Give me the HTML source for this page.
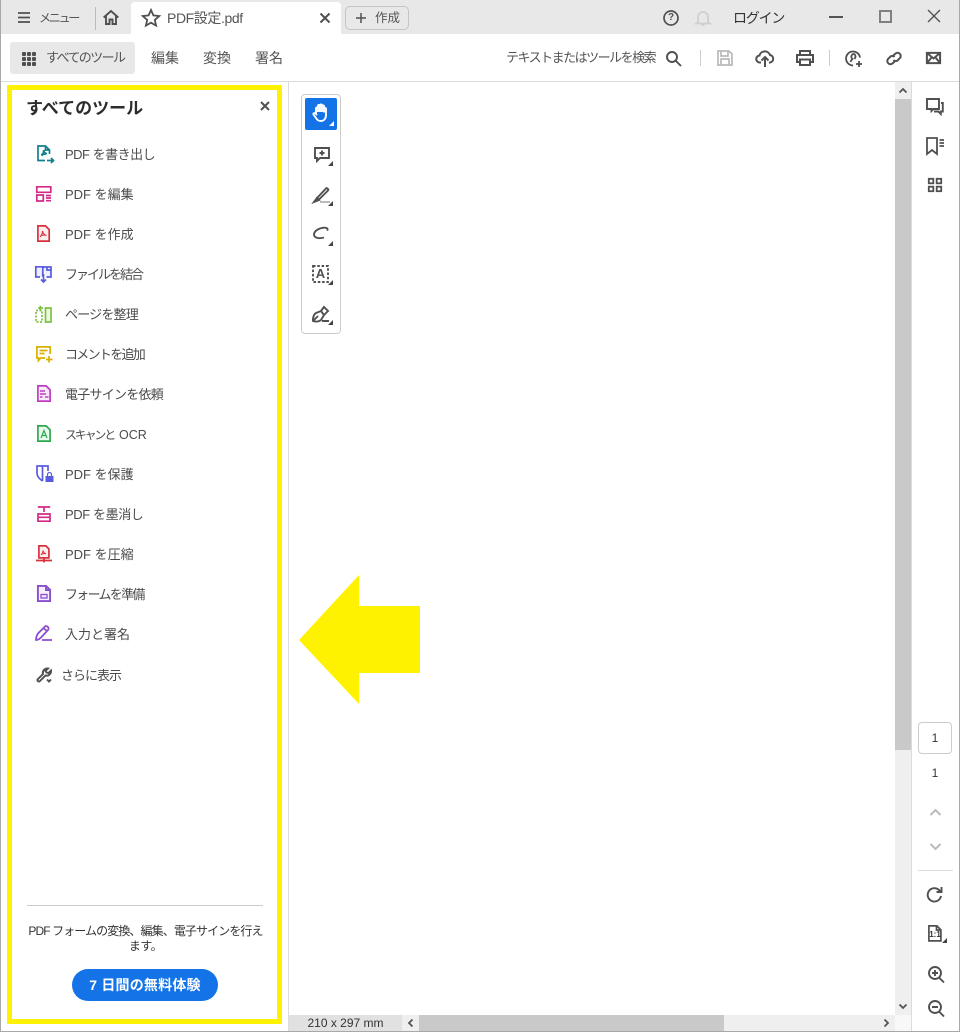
<!DOCTYPE html>
<html lang="ja"><head><meta charset="utf-8"><title>PDF設定.pdf</title>
<style>
html,body{margin:0;padding:0;background:#fff}
body{width:960px;height:1032px;position:relative;overflow:hidden;font-family:"Liberation Sans","Noto Sans CJK JP",sans-serif;color:#4b4b4b}
.a{position:absolute}
.t{position:absolute;white-space:nowrap;line-height:20px;height:20px}
svg{position:absolute;overflow:visible;fill:none;stroke:#505050;stroke-width:1.7}
.tool{font-size:13px;left:65px;color:#4b4b4b}
.tri{position:absolute;width:0;height:0;border-style:solid;border-width:0 0 6px 6px;border-color:transparent transparent #444 transparent}
</style></head><body>
<!-- title bar -->
<div class="a" style="left:0;top:0;width:960px;height:34px;background:#e8e8e8"></div>
<div class="a" style="left:131px;top:2px;width:210px;height:32px;background:#fff;border-radius:4px 4px 0 0"></div>
<svg style="left:18px;top:12px" width="12" height="11"><path d="M0 1H12M0 5.5H12M0 10H12"/></svg>
<div class="t" style="left:39px;top:8px;font-size:12px;color:#555;letter-spacing:-2.200px">メニュー</div>
<div class="a" style="left:95px;top:7px;width:1px;height:23px;background:#bbb"></div>
<svg style="left:103px;top:10px;stroke-width:1.900" width="16" height="15"><path d="M.7 7.500 8 1l7.300 6.500M3 6v8h3.500V9.500h3V14H13V6"/></svg>
<svg style="left:142px;top:9px;stroke-width:1.800" width="18" height="17"><path d="M9 1l2.400 5.400 5.800.6-4.400 3.900 1.300 5.700L9 13.700l-5.100 2.900 1.300-5.700L.8 7l5.800-.6z"/></svg>
<div class="t" style="left:167px;top:8px;font-size:14px;color:#555;letter-spacing:-.400px">PDF設定.pdf</div>
<svg style="left:320px;top:13px;stroke-width:2" width="10" height="10"><path d="M.5.500l9 9M9.500.500l-9 9"/></svg>
<div class="a" style="left:345px;top:6px;width:62px;height:22px;border:1px solid #c4c4c4;border-radius:5px"></div>
<svg style="left:356px;top:13px;stroke-width:1.500" width="10" height="10"><path d="M5 0v10M0 5h10"/></svg>
<div class="t" style="left:375px;top:8px;font-size:12.500px;color:#555">作成</div>
<svg style="left:663px;top:10px" width="16" height="16"><circle cx="8" cy="8" r="7"/></svg>
<div class="t" style="left:663px;top:8px;width:16px;text-align:center;font-size:10px;font-weight:bold;color:#505050">?</div>
<svg style="left:695px;top:10px;stroke:#cfcfcf" width="16" height="16"><path d="M3 12V7a5 5 0 0 1 10 0v5l2 1.500H1zM6.500 15h3"/></svg>
<div class="t" style="left:733px;top:8px;font-size:14px;color:#333;letter-spacing:-1.200px">ログイン</div>
<div class="a" style="left:829px;top:16px;width:14px;height:2px;background:#555"></div>
<div class="a" style="left:879px;top:10px;width:9px;height:9px;border:2px solid #808080"></div>
<svg style="left:928px;top:10px;stroke-width:1.300" width="12" height="12"><path d="M0 0l12 12M12 0 0 12"/></svg>
<!-- toolbar -->
<div class="a" style="left:0;top:81px;width:960px;height:1px;background:#dcdcdc"></div>
<div class="a" style="left:10px;top:42px;width:125px;height:32px;background:#e8e8e8;border-radius:3px"></div>
<svg style="left:22px;top:52px;stroke:none;fill:#505050" width="14" height="14"><rect width="4" height="4" rx="1"/><rect x="5" width="4" height="4" rx="1"/><rect x="10" width="4" height="4" rx="1"/><rect y="5" width="4" height="4" rx="1"/><rect x="5" y="5" width="4" height="4" rx="1"/><rect x="10" y="5" width="4" height="4" rx="1"/><rect y="10" width="4" height="4" rx="1"/><rect x="5" y="10" width="4" height="4" rx="1"/><rect x="10" y="10" width="4" height="4" rx="1"/></svg>
<div class="t" style="left:46px;top:48px;font-size:13px;color:#555;letter-spacing:-1.600px">すべてのツール</div>
<div class="t" style="left:151px;top:48px;font-size:14px;color:#555">編集</div>
<div class="t" style="left:203px;top:48px;font-size:14px;color:#555">変換</div>
<div class="t" style="left:255px;top:48px;font-size:14px;color:#555">署名</div>
<div class="t" style="left:506px;top:48px;font-size:13px;color:#555;letter-spacing:-1.500px">テキストまたはツールを検索</div>
<svg style="left:666px;top:51px;stroke-width:1.900" width="15" height="15"><circle cx="6" cy="6" r="5"/><path d="M9.500 9.500 15 15"/></svg>
<div class="a" style="left:700px;top:50px;width:1px;height:16px;background:#ccc"></div>
<svg style="left:717px;top:50px;stroke:#b9b9b9" width="16" height="16"><path d="M1 1h11l3 3v11H1zM4 1v5h7V1M4 15v-6h8v6"/></svg>
<svg style="left:756px;top:50px;stroke-width:2" width="18" height="17"><path d="M5 12.500H4a3.500 3.500 0 0 1-.5-7A5.500 5.500 0 0 1 14 5a3.800 3.800 0 0 1 0 7.500h-1M9 17V8M5.500 10.500 9 7l3.500 3.500"/></svg>
<svg style="left:796px;top:50px;stroke-width:2" width="18" height="16"><path d="M4 5V1h10v4M4 12H1V5h16v7h-3M4 9.500h10V15H4z"/></svg>
<div class="a" style="left:829px;top:50px;width:1px;height:16px;background:#ccc"></div>
<svg style="left:845px;top:50px;stroke-width:1.800" width="18" height="18"><path d="M8 15.500A7 7 0 1 1 15 7.500M5.500 12c.5-2 1.500-2.500 2-3-2.500-2-.5-5 1-5s3 2.500 1 5M14 11v6M11 14h6"/></svg>
<svg style="left:886px;top:51px;stroke-width:2" width="16" height="15"><path d="M6.500 5.500 9 3a3 3 0 0 1 5 4l-2.500 2.500a3 3 0 0 1-4-.5M9.500 9.500 7 12a3 3 0 0 1-5-4l2.500-2.500a3 3 0 0 1 4 .5"/></svg>
<svg style="left:926px;top:52px;stroke-width:2" width="15" height="12"><path d="M.9.900h13.200v10.200H.9zM1 1l6.500 5.500L14 1M1 11l4.500-5.500M14 11 9.500 5.500"/></svg>
<!-- panel -->
<div class="a" style="left:288px;top:82px;width:1px;height:950px;background:#dcdcdc"></div>
<div class="a" style="left:7px;top:85px;width:265px;height:929px;border:5px solid #fff200"></div>
<div class="t" style="left:26px;top:98px;font-size:17px;font-weight:bold;color:#2c2c2c;line-height:22px">すべてのツール</div>
<svg style="left:261px;top:102px;stroke-width:2" width="8" height="8"><path d="M0 0l8 8M8 0 0 8"/></svg>
<svg style="left:37px;top:145px;stroke:#12808c" width="17" height="18"><path d="M8 15.500H1V1h7.500L12.500 5v4M8.500 1v4h4M5 11c1-2 2-4 1.500-6 1 3 2 3.500 3.500 3.700M4 9.500 9 9M10 15.500h6M14 13l2.500 2.500L14 18"/></svg>
<div class="t tool" style="top:145px;letter-spacing:-.500px">PDF を書き出し</div>
<svg style="left:36px;top:186px;stroke:#d22a86" width="16" height="16"><path d="M.8.800h14v5.500H.800zM.8 9h6.500v6H.8zM10 9.500h5M10 12h5M10 14.700h5" /></svg>
<div class="t tool" style="top:185px">PDF を編集</div>
<svg style="left:37px;top:225px;stroke:#d9303e" width="13" height="17"><path d="M.9.900h7.600l3.700 3.700v11.500H.9z" fill="#fdeeee"/><path d="M3 12c1.500-1.500 2.500-4 2.500-6 .5 2.500 2 4 4 4.500M3.500 10.500l5-.5" stroke-width="1.100"/></svg>
<div class="t tool" style="top:225px">PDF を作成</div>
<svg style="left:35px;top:266px;stroke:#5a5ce0" width="17" height="17"><path d="M5 11H.8V.800h7v10M8 1h8v10h-4.500M12 1v3h4" fill="#eef" /><path d="M8.500 8v8M6 13.500l2.500 2.500 2.500-2.500"/></svg>
<div class="t tool" style="top:265px;letter-spacing:-2px">ファイルを結合</div>
<svg style="left:35px;top:306px;stroke:#7cc242" width="17" height="17"><path d="M10.500 2H16v14h-5.500z" fill="#eef8e4"/><path d="M1 4.500h6V16H1z" stroke-dasharray="2 1.500"/><path d="M8 2H4.500M6 .2 4 2l2 2"/></svg>
<div class="t tool" style="top:305px;letter-spacing:-.800px">ページを整理</div>
<svg style="left:36px;top:346px;stroke:#d7b000" width="17" height="17"><path d="M9 12H4.500L2.500 14.500V12H.9V.9h13.200V8M3.500 4.500h8M3.500 7.500h5M13 10v6.500M10 13.500h6.500"/></svg>
<div class="t tool" style="top:345px;letter-spacing:-1.700px">コメントを追加</div>
<svg style="left:37px;top:385px;stroke:#be3cc4" width="14" height="17"><path d="M.9.900h8.200l4 4v11.200H.900z" fill="#faeafb"/><path d="M3 6h5M3 9h6M3 12h2.500M8 12h3.500" stroke-width="1.600"/></svg>
<div class="t tool" style="top:385px;letter-spacing:-.750px">電子サインを依頼</div>
<svg style="left:37px;top:425px;stroke:#2ea84f" width="14" height="17"><path d="M.9.900h8.200l4 4v11.200H.900z" fill="#eaf7ee"/><path d="M4 13l3-7.500L10 13M5 10.500h4" stroke-width="1.200"/></svg>
<div class="t tool" style="top:425px"><span style="font-size:12px;letter-spacing:-2.200px">スキャンと</span></div>
<div class="t tool" style="left:119px;top:425px;font-size:12.500px">OCR</div>
<svg style="left:36px;top:465px;stroke:#5a5ce0" width="18" height="18"><path d="M6.500 1H1v7c0 3.500 2.500 6 5.500 8M6.500 1H12v5M6.500 1v15" /><rect x="9.500" y="11" width="8" height="6" fill="#5a5ce0" stroke="none"/><path d="M11.500 11V9.500a2 2 0 0 1 4 0V11" stroke-width="1.200"/></svg>
<div class="t tool" style="top:465px">PDF を保護</div>
<svg style="left:37px;top:506px;stroke:#d22a86" width="14" height="16"><path d="M.8 1h12.400M7 1v5M1 8h12v7.200H1zM1 11.300h12" /></svg>
<div class="t tool" style="top:505px;letter-spacing:-.400px">PDF を墨消し</div>
<svg style="left:36px;top:545px;stroke:#d9303e" width="16" height="18"><path d="M2.900.900h7l3 3v9H2.900z" fill="#fdeeee"/><path d="M5 10c1-1 2-3 2-4.500.5 2 1.500 3 3 3.200M5.500 9l4-.5" stroke-width="1"/><path d="M0 15.500h16M8 13.500v4"/></svg>
<div class="t tool" style="top:545px">PDF を圧縮</div>
<svg style="left:37px;top:585px;stroke:#8a4fd0;stroke-width:1.900" width="14" height="17"><path d="M.9.900h8.200l4 4v11.200H.900z" fill="#f5eefc"/><path d="M9 1v4h4"/><rect x="4" y="9.500" width="6" height="3.500" stroke-width="1.300"/></svg>
<div class="t tool" style="top:585px;letter-spacing:-1.700px">フォームを準備</div>
<svg style="left:35px;top:625px;stroke:#8a4fd0;stroke-width:1.800" width="18" height="17"><path d="M1 15c0-2 1-5 2-6.500L10 1.500c1-1 3 0 3.500 1.500.3 1-.3 2-1 2.500L6 12.500C4.500 14 3 15 1 15zM9 3.500l3.500 3M7 15h10" /></svg>
<div class="t tool" style="top:625px">入力と署名</div>
<svg style="left:36px;top:667px;stroke-width:1.900" width="17" height="16"><path d="M3 14.500a1.500 1.500 0 0 1-1.500-2L7 7c-1-2.500 1.500-6 5-5.500L9.500 4l1 1.500 2 .5L15 3.500c.5 3-2.500 6-5.500 5L4 14c-.3.300-.7.500-1 .5zM11 12.500l2 2 2-2"/></svg>
<div class="t tool" style="left:61px;top:666px;letter-spacing:-1px">さらに表示</div>
<div class="a" style="left:27px;top:905px;width:236px;height:1px;background:#ccc"></div>
<div class="t" style="left:27px;top:921px;width:237px;text-align:center;font-size:12px;color:#333;letter-spacing:-.900px">PDF フォームの変換、編集、電子サインを行え</div>
<div class="t" style="left:27px;top:936px;width:237px;text-align:center;font-size:12px;color:#333;letter-spacing:-.500px">ます。</div>
<div class="a" style="left:72px;top:969px;width:146px;height:32px;border-radius:16px;background:#1473e6;color:#fff;font-size:14px;font-weight:bold;line-height:32px;text-align:center;letter-spacing:.200px">7 日間の無料体験</div>
<!-- floating tools -->
<div class="a" style="left:301px;top:94px;width:38px;height:238px;border:1px solid #ccc;border-radius:4px"></div>
<div class="a" style="left:305px;top:98px;width:32px;height:32px;background:#1473e6;border-radius:2px"></div>
<svg style="left:312px;top:103px;stroke:#fff;stroke-width:1.900" width="18" height="20"><path d="M4 11V5.500a1 1 0 0 1 2 0V9M6 9V3a1 1 0 0 1 2 0v6M8 9V2.500a1 1 0 0 1 2 0V9M10 9V3.500a1 1 0 0 1 2 0V9.500M12 9V6a1 1 0 0 1 2 0v6c0 3.500-2 6-5 6-2.500 0-4-1-5-3L1.500 11.500c-.5-1 1-2 2-1L5 12"/></svg>
<div class="tri" style="left:329px;top:121px;border-width:0 0 5px 5px;border-bottom-color:#fff"></div>
<svg style="left:314px;top:147px;stroke-width:1.900" width="16" height="16"><path d="M1 1h14v10H6l-3 3v-3H1zM8 3.500v5M5.500 6h5"/></svg>
<div class="tri" style="left:328px;top:161px;border-width:0 0 5px 5px"></div>
<svg style="left:313px;top:186px;stroke-width:1.900" width="18" height="18"><path d="M4 12 13 2.500c1-1 3 1 2 2L6 13.500z"/><path d="M1 16l3-4 2 2z" fill="#505050"/><path d="M7 16h10" stroke="#bbb" stroke-width="2"/></svg>
<div class="tri" style="left:328px;top:201px;border-width:0 0 5px 5px"></div>
<svg style="left:313px;top:227px;stroke-width:1.900" width="16" height="14"><path d="M14 3.500c1.500-1.500 0-3-3-2.800C6 1 1 4 1 7.500c0 3.500 5 4.500 10 3"/></svg>
<div class="tri" style="left:328px;top:241px;border-width:0 0 5px 5px"></div>
<svg style="left:312px;top:265px;stroke-dasharray:2.500 1.800;stroke-width:1.900" width="17" height="18"><rect x="1" y="1" width="15" height="16"/></svg>
<div class="t" style="left:312px;top:265px;width:17px;height:18px;line-height:18px;text-align:center;font-size:13px;font-weight:bold;color:#505050">A</div>
<div class="tri" style="left:328px;top:280px;border-width:0 0 5px 5px"></div>
<svg style="left:312px;top:306px;stroke-width:1.900" width="18" height="17"><path d="M1 15c-.5-3 1-7 3-8l5-2 3 4-3 5c-2 1.500-5 2-8 1zM1 15l5-5M9 5l3-4 4 4-4 4M10 15h7"/></svg>
<div class="tri" style="left:328px;top:320px;border-width:0 0 5px 5px"></div>
<!-- arrow -->
<svg style="left:299px;top:575px;stroke:none;fill:#fff200" width="121" height="129"><path d="M0 65 60 0V31H121V98H60V129z"/></svg>
<!-- scrollbars -->
<div class="a" style="left:895px;top:82px;width:16px;height:933px;background:#efefef"></div>
<div class="a" style="left:895px;top:99px;width:16px;height:651px;background:#c9c9c9"></div>
<svg style="left:899px;top:88px;stroke:#555;stroke-width:1.800" width="8" height="5"><path d="M.5 4.500 4 1l3.500 3.500"/></svg>
<svg style="left:899px;top:1004px;stroke:#555;stroke-width:1.800" width="8" height="5"><path d="M.5.500 4 4 7.500.5"/></svg>
<div class="a" style="left:289px;top:1015px;width:113px;height:16px;background:#e1e1e1"></div>
<div class="t" style="left:289px;top:1013px;width:113px;text-align:center;font-size:12px;color:#333">210 x 297 mm</div>
<div class="a" style="left:402px;top:1015px;width:493px;height:16px;background:#efefef"></div>
<div class="a" style="left:419px;top:1015px;width:305px;height:16px;background:#c9c9c9"></div>
<div class="a" style="left:895px;top:1015px;width:16px;height:16px;background:#f8f8f8"></div>
<svg style="left:408px;top:1019px;stroke:#555;stroke-width:1.800" width="5" height="8"><path d="M4.500.500 1 4l3.500 3.500"/></svg>
<svg style="left:884px;top:1019px;stroke:#555;stroke-width:1.800" width="5" height="8"><path d="M.5.500 4 4 .5 7.500"/></svg>
<!-- right rail -->
<div class="a" style="left:911px;top:82px;width:1px;height:949px;background:#dcdcdc"></div>
<svg style="left:926px;top:98px;stroke-width:1.900" width="18" height="17"><path d="M1 1h12v10H7.500L5.500 13v-2H1zM15 5h1.800v8.500h-2V16l-2.500-2.500H8"/></svg>
<svg style="left:926px;top:137px;stroke-width:1.800" width="18" height="18"><path d="M1 1h10v16l-5-4-5 4zM13.500 3H18M13.500 6H18M13.500 9H18" /></svg>
<svg style="left:928px;top:178px;stroke-width:1.800" width="14" height="14"><rect x=".8" y=".8" width="4.500" height="4.500"/><rect x="8.700" y=".8" width="4.500" height="4.500"/><rect x=".8" y="8.700" width="4.500" height="4.500"/><rect x="8.700" y="8.700" width="4.500" height="4.500"/></svg>
<div class="a" style="left:918px;top:722px;width:32px;height:30px;border:1px solid #ccc;border-radius:4px"></div>
<div class="t" style="left:918px;top:728px;width:34px;text-align:center;font-size:12px;color:#333">1</div>
<div class="t" style="left:918px;top:763px;width:34px;text-align:center;font-size:12px;color:#333">1</div>
<svg style="left:930px;top:809px;stroke:#bbb;stroke-width:2" width="11" height="7"><path d="M.5 6 5.500 1l5 5"/></svg>
<svg style="left:930px;top:843px;stroke:#bbb;stroke-width:2" width="11" height="7"><path d="M.5 1l5 5 5-5"/></svg>
<div class="a" style="left:918px;top:870px;width:35px;height:1px;background:#ddd"></div>
<svg style="left:927px;top:886px;stroke-width:1.900" width="16" height="17"><path d="M14 10a6.700 6.700 0 1 1-2-6L14.500 6M14.500 1v5h-5"/></svg>
<svg style="left:928px;top:925px" width="14" height="17"><path d="M.9.900h8l4 4v11H.9zM8.500 1v4h4.500"/></svg>
<div class="t" style="left:928px;top:925px;width:14px;text-align:center;font-size:8px;font-weight:bold;line-height:20px;color:#333">1:1</div>
<div class="tri" style="left:942px;top:938px;border-width:0 0 5px 5px"></div>
<svg style="left:928px;top:966px;stroke-width:1.900" width="16" height="17"><circle cx="7" cy="7" r="6"/><path d="M11 11.500 16 16.500M7 4v6M4 7h6"/></svg>
<svg style="left:928px;top:1000px;stroke-width:1.900" width="16" height="17"><circle cx="7" cy="7" r="6"/><path d="M11 11.500 16 16.500M4 7h6"/></svg>
<!-- window border -->
<div class="a" style="left:0;top:0;width:1px;height:1032px;background:#a8a8a8"></div>
<div class="a" style="left:959px;top:0;width:1px;height:1032px;background:#a8a8a8"></div>
<div class="a" style="left:0;top:1031px;width:960px;height:1px;background:#a8a8a8"></div>
</body></html>
